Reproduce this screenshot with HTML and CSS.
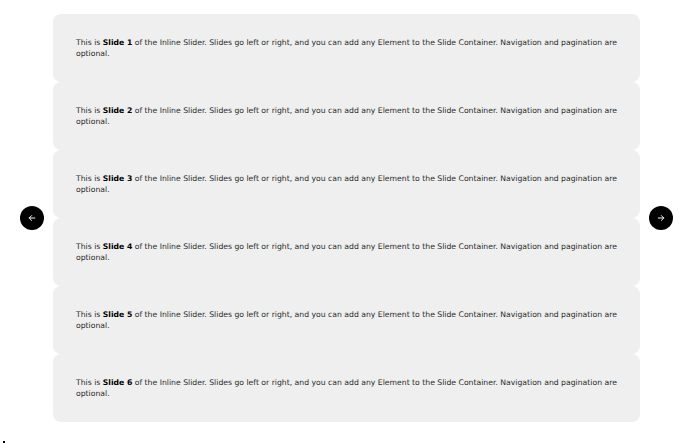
FILE: index.html
```html
<!DOCTYPE html>
<html lang="en">
<head>
  <meta charset="UTF-8" />
  <title>Inline Slider</title>
  <link rel="stylesheet" href="styles.css">
</head>
<body>

  <!-- Slider -->
  <div class="slider">
    <button class="nav-btn" aria-label="Previous">
      <svg viewBox="0 0 10 10" width="8" height="8"><path d="M8.5 5H1.5M4.5 2L1.5 5L4.5 8" fill="none" stroke="#fff" stroke-width="1.2" stroke-linecap="round" stroke-linejoin="round"/></svg>
    </button>

    <div class="slides">
      <div class="slide"><p>This is <b>Slide 1</b> of the Inline Slider. Slides go left or right, and you can add any Element to the Slide Container. Navigation and pagination are optional.</p></div>
      <div class="slide"><p>This is <b>Slide 2</b> of the Inline Slider. Slides go left or right, and you can add any Element to the Slide Container. Navigation and pagination are optional.</p></div>
      <div class="slide"><p>This is <b>Slide 3</b> of the Inline Slider. Slides go left or right, and you can add any Element to the Slide Container. Navigation and pagination are optional.</p></div>
      <div class="slide"><p>This is <b>Slide 4</b> of the Inline Slider. Slides go left or right, and you can add any Element to the Slide Container. Navigation and pagination are optional.</p></div>
      <div class="slide"><p>This is <b>Slide 5</b> of the Inline Slider. Slides go left or right, and you can add any Element to the Slide Container. Navigation and pagination are optional.</p></div>
      <div class="slide"><p>This is <b>Slide 6</b> of the Inline Slider. Slides go left or right, and you can add any Element to the Slide Container. Navigation and pagination are optional.</p></div>
    </div>

    <button class="nav-btn" aria-label="Next">
      <svg viewBox="0 0 10 10" width="8" height="8"><path d="M1.5 5H8.5M5.5 2L8.5 5L5.5 8" fill="none" stroke="#fff" stroke-width="1.2" stroke-linecap="round" stroke-linejoin="round"/></svg>
    </button>
  </div>

  <!-- Pagination -->
  <div class="pagination"><span class="dot"></span></div>

</body>
</html>
```

FILE: styles.css
```css
    body, html {
      margin: 0;
      padding: 0;
      font-family: "DejaVu Sans", sans-serif;
      background-color: #fff;
    }

    .slider {
      display: flex;
      align-items: center;
      gap: 9px;
      padding: 14px 17px 0 20px;
    }

    .nav-btn {
      width: 24px;
      height: 24px;
      flex: none;
      border: none;
      border-radius: 50%;
      background-color: #000;
      padding: 0;
      display: flex;
      justify-content: center;
      align-items: center;
      cursor: pointer;
    }

    .slides {
      width: 587px;
      display: flex;
      flex-direction: column;
    }

    .slide {
      height: 68px;
      box-sizing: border-box;
      padding: 0 23px;
      background-color: #efefef;
      border-radius: 8px;
      display: flex;
      align-items: center;
    }

    .slide p {
      margin: 0 0 1px;
      font-size: 7.7px;
      line-height: 11px;
      color: #2a2a2a;
    }

    .slide b {
      color: #000;
    }

    .pagination {
      padding: 19px 0 0 3px;
    }

    .dot {
      display: block;
      width: 2px;
      height: 2px;
      background: #000;
    }
```
